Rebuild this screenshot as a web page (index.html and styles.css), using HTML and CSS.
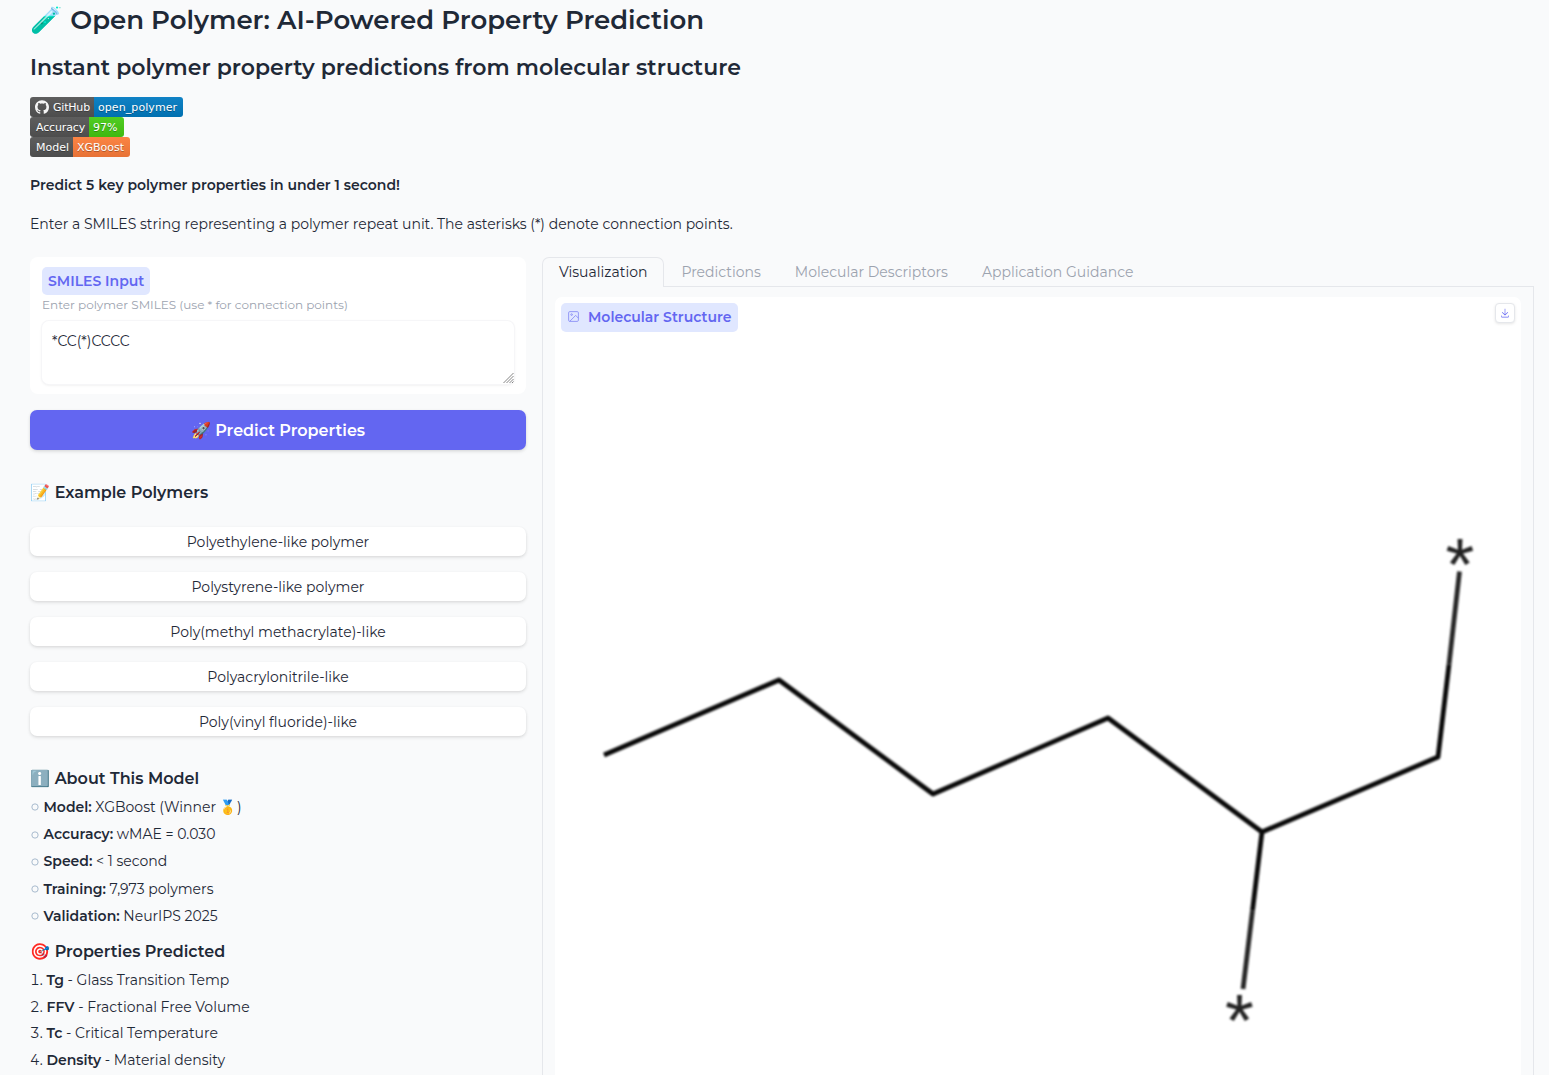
FILE: index.html
```html
<!DOCTYPE html>
<html lang="en">
<head>
<meta charset="utf-8">
<title>Open Polymer</title>
<link rel="stylesheet" href="styles.css">
</head>
<body>
<main class="page">
  <header class="intro">
    <h1><span class="emoji">🧪</span> Open Polymer: AI-Powered Property Prediction</h1>
    <h2>Instant polymer property predictions from molecular structure</h2>
    <div class="badges">
      <span class="badge"><span class="key key-github"><svg class="github" viewBox="0 0 24 24"><path fill="#f5f5f5" d="M12 .297c-6.63 0-12 5.373-12 12 0 5.303 3.438 9.8 8.205 11.385.6.113.82-.258.82-.577 0-.285-.01-1.04-.015-2.04-3.338.724-4.042-1.61-4.042-1.61C4.422 18.07 3.633 17.7 3.633 17.7c-1.087-.744.084-.729.084-.729 1.205.084 1.838 1.236 1.838 1.236 1.07 1.835 2.809 1.305 3.495.998.108-.776.417-1.305.76-1.605-2.665-.3-5.466-1.332-5.466-5.93 0-1.31.465-2.38 1.235-3.22-.135-.303-.54-1.523.105-3.176 0 0 1.005-.322 3.3 1.23.96-.267 1.98-.399 3-.405 1.02.006 2.04.138 3 .405 2.28-1.552 3.285-1.23 3.285-1.23.645 1.653.24 2.873.12 3.176.765.84 1.23 1.91 1.23 3.22 0 4.61-2.805 5.625-5.475 5.92.42.36.81 1.096.81 2.22 0 1.606-.015 2.896-.015 3.286 0 .315.21.69.825.57C20.565 22.092 24 17.592 24 12.297c0-6.627-5.373-12-12-12"/></svg>GitHub</span><span class="val blue">open_polymer</span></span>
      <span class="badge"><span class="key key-accuracy">Accuracy</span><span class="val green">97%</span></span>
      <span class="badge"><span class="key key-model">Model</span><span class="val orange">XGBoost</span></span>
    </div>
    <p class="lead"><strong>Predict 5 key polymer properties in under 1 second!</strong></p>
    <p class="hint">Enter a SMILES string representing a polymer repeat unit. The asterisks (*) denote connection points.</p>
  </header>
  <div class="columns">
    <section class="left">
      <div class="field">
        <label class="tag" for="smiles">SMILES Input</label>
        <span class="info">Enter polymer SMILES (use * for connection points)</span>
        <div class="input-wrap">
          <textarea id="smiles" spellcheck="false">*CC(*)CCCC</textarea>
          <svg class="grip" viewBox="0 0 11 10"><path d="M.5 10L10.5 0M3.5 10L10.5 3M6.5 10L10.5 6M9 10L10.5 8.5"/></svg>
        </div>
      </div>
      <button class="primary"><span class="emoji">🚀</span> Predict Properties</button>
      <h3 class="examples-title"><span class="emoji">📝</span> Example Polymers</h3>
      <div class="examples">
        <button>Polyethylene-like polymer</button>
        <button>Polystyrene-like polymer</button>
        <button>Poly(methyl methacrylate)-like</button>
        <button>Polyacrylonitrile-like</button>
        <button>Poly(vinyl fluoride)-like</button>
      </div>
      <h3 class="about-title"><span class="emoji">ℹ️</span> About This Model</h3>
      <ul class="facts">
        <li><span><strong>Model:</strong> XGBoost (Winner <span class="emoji">🥇</span>)</span></li>
        <li><span><strong>Accuracy:</strong> wMAE = 0.030</span></li>
        <li><span><strong>Speed:</strong> &lt; 1 second</span></li>
        <li><span><strong>Training:</strong> 7,973 polymers</span></li>
        <li><span><strong>Validation:</strong> NeurIPS 2025</span></li>
      </ul>
      <h3 class="props-title"><span class="emoji">🎯</span> Properties Predicted</h3>
      <ol class="props">
        <li><span><strong>Tg</strong> - Glass Transition Temp</span></li>
        <li><span><strong>FFV</strong> - Fractional Free Volume</span></li>
        <li><span><strong>Tc</strong> - Critical Temperature</span></li>
        <li><span><strong>Density</strong> - Material density</span></li>
      </ol>
    </section>
    <section class="right">
      <nav class="tabs">
        <a class="tab active">Visualization</a>
        <a class="tab">Predictions</a>
        <a class="tab">Molecular Descriptors</a>
        <a class="tab">Application Guidance</a>
        <i class="tabs-rule"></i>
      </nav>
      <div class="panel">
        <div class="viewer">
          <div class="viewer-label"><svg viewBox="0 0 24 24"><rect x="3" y="3" width="18" height="18" rx="2"/><circle cx="8.5" cy="8.5" r="1.5"/><path d="M21 15l-5-5L5 21"/></svg>Molecular Structure</div>
          <button class="download" aria-label="Download"><svg viewBox="0 0 32 32"><path d="M26 24v4H6v-4H4v4a2 2 0 0 0 2 2h20a2 2 0 0 0 2-2v-4zm0-10l-1.41-1.41L17 20.17V2h-2v18.17l-7.59-7.58L6 14l10 10l10-10z"/></svg></button>
          <svg class="molecule" viewBox="0 0 966 778">
            <path class="half" d="M894 367.500L904.500 274.500M697.500 613.500L688 692"/>
            <path d="M49 458L224 383L378 497L553 421L707 535L883 460L894 367.500M707 535L697.500 613.500"/>
            <text x="905" y="293">*</text>
            <text x="684.500" y="749">*</text>
          </svg>
        </div>
      </div>
    </section>
  </div>
</main>
</body>
</html>
```
FILE: styles.css
```css
* { box-sizing: border-box; }
body { margin: 0; height: 1075px; overflow: hidden; background: #f9fafb; color: #1f2937; font: 400 14px/20px Montserrat, Inter, "Noto Color Emoji", sans-serif; }
h1, h2, h3, p, ul, ol { margin: 0; padding: 0; }
strong, h1, h2, h3 { font-weight: 600; }
.page { padding: 0 15px 0 30px; }
h1 { font-size: 26px; line-height: 40px; height: 40px; white-space: nowrap; }
h1 .emoji { margin-right: .7px; }
h2 { font-size: 22px; line-height: 30px; padding-top: 13px; height: 57px; }
.badges { display: flex; flex-direction: column; align-items: flex-start; }
.badge { display: flex; height: 20px; border-radius: 3px; overflow: hidden; color: #fff; font: 400 11px/20px "DejaVu Sans", sans-serif; text-shadow: 0 1px 0 rgba(1,1,1,.3); }
.key, .val { display: flex; align-items: center; background: linear-gradient(#5e5e5e, #4d4d4d); padding: 1px 0 0 6px; }
.val { padding-left: 4px; }
.key-github { width: 64px; padding-left: 5px; gap: 4px; letter-spacing: -.2px; }
.key-accuracy { width: 59px; letter-spacing: -.15px; }
.key-model { width: 43px; }
.github { width: 14px; height: 14px; margin-top: -1px; }
.blue { width: 89px; background: linear-gradient(#1082c5, #0070b0); letter-spacing: .08px; }
.green { width: 35px; background: linear-gradient(#50cd22, #3fb810); }
.orange { width: 57px; background: linear-gradient(#fb8444, #e77236); }
.lead { padding-top: 18px; height: 57px; }
.hint { height: 43px; }
.columns { display: flex; gap: 16px; }
.left { width: 496px; flex: none; }
.field { height: 137px; padding: 10px 12px 9px 12px; background: #fff; border-radius: 8px; display: flex; flex-direction: column; align-items: flex-start; }
.tag { height: 28px; line-height: 28px; padding: 0 6px; border-radius: 5px; background: #e0e7ff; color: #6366f1; font-weight: 600; }
.info { font-size: 12px; line-height: 20px; color: #9ca3af; }
.input-wrap { position: relative; width: 472px; height: 63px; margin-top: 6px; }
textarea { display: block; width: 100%; height: 100%; padding: 10px; border: 0; border-radius: 7px; outline: 0; box-shadow: 0 0 0 1px #f6f6f8, 0 1px 3px rgba(0,0,0,.1); font: inherit; color: inherit; background: #fff; resize: none; }
.grip { position: absolute; right: 0; bottom: 1px; width: 11px; height: 10px; fill: none; stroke: #777; stroke-width: .9; }
button { font: inherit; color: inherit; border: 0; padding: 0; }
.primary { display: block; width: 100%; height: 40px; margin-top: 16px; padding-top: 1px; border-radius: 7px; background: #6366f1; color: #fff; font-size: 16px; font-weight: 600; box-shadow: 0 1px 3px rgba(0,0,0,.1), 0 2px 4px rgba(0,0,0,.06); }
h3 { font-size: 16px; line-height: 24px; height: 24px; }
h3 .emoji { margin-right: .3px; }
.examples-title { margin-top: 31px; }
.examples { margin-top: 22px; display: grid; gap: 16px; }
.examples button { height: 29px; border-radius: 7px; background: #fff; box-shadow: 0 1px 3px rgba(0,0,0,.1), 0 2px 4px rgba(0,0,0,.05); }
.about-title { margin-top: 31px; }
ul, ol { list-style: none; }
.facts { margin-top: 5.8px; display: grid; gap: 7.3px; }
.facts li { display: flex; align-items: center; height: 20px; }
.facts li::before { content: ""; width: 6px; height: 6px; margin: 1px 6.5px 0 1px; border: 1px solid #9fb3c8; border-radius: 50%; transform: scale(.9); }
.facts li > span { margin-left: -2px; }
.props-title { margin-top: 14.2px; }
.props { counter-reset: n; margin-top: 5.7px; display: grid; gap: 6.7px; }
.props li { counter-increment: n; height: 20px; display: flex; }
.props li::before { content: counter(n) "."; width: 16.5px; font-variant-numeric: tabular-nums; }
.right { flex: 1; position: relative; height: 818px; display: flex; flex-direction: column; }
.tabs { display: flex; height: 30px; }
.tab { padding: 5px 17px; color: #9ca3af; border-bottom: 1px solid #e5e7eb; }
.tab.active { color: #1f2937; padding: 4px 16px; border: 1px solid #e5e7eb; border-bottom: 0; border-radius: 7px 7px 0 0; }
.tabs-rule { flex: 1; border-bottom: 1px solid #e5e7eb; }
.panel { flex: 1; border: 1px solid #e5e7eb; border-width: 0 1px; padding: 10px 12px 0; }
.viewer { position: relative; height: 778px; background: #fff; border-radius: 7px 7px 0 0; }
.viewer-label { position: absolute; left: 6px; top: 6px; width: 177px; height: 29px; padding: 0 6px 1px; display: flex; align-items: center; gap: 8px; background: #e0e7ff; border-radius: 5px; color: #6366f1; font-weight: 600; }
.viewer-label svg { width: 13px; height: 13px; margin-top: -1px; fill: none; stroke: #6366f1; stroke-width: 1.5; opacity: .75; }
.download { position: absolute; right: 6px; top: 6px; width: 20px; height: 20px; display: grid; place-items: center; background: #fff; border: 1px solid #e5e7eb; border-radius: 4px; box-shadow: 0 1px 3px rgba(0,0,0,.1); }
.download svg { width: 10px; height: 10px; fill: #6366f1; }
.molecule { display: block; width: 100%; height: 778px; filter: blur(.8px); }
.molecule path { fill: none; stroke: #080808; stroke-width: 4.8; stroke-linejoin: round; }
.molecule .half { stroke: #262626; }
.molecule text { font: 400 74px "Liberation Sans", sans-serif; fill: #222; text-anchor: middle; }
```
